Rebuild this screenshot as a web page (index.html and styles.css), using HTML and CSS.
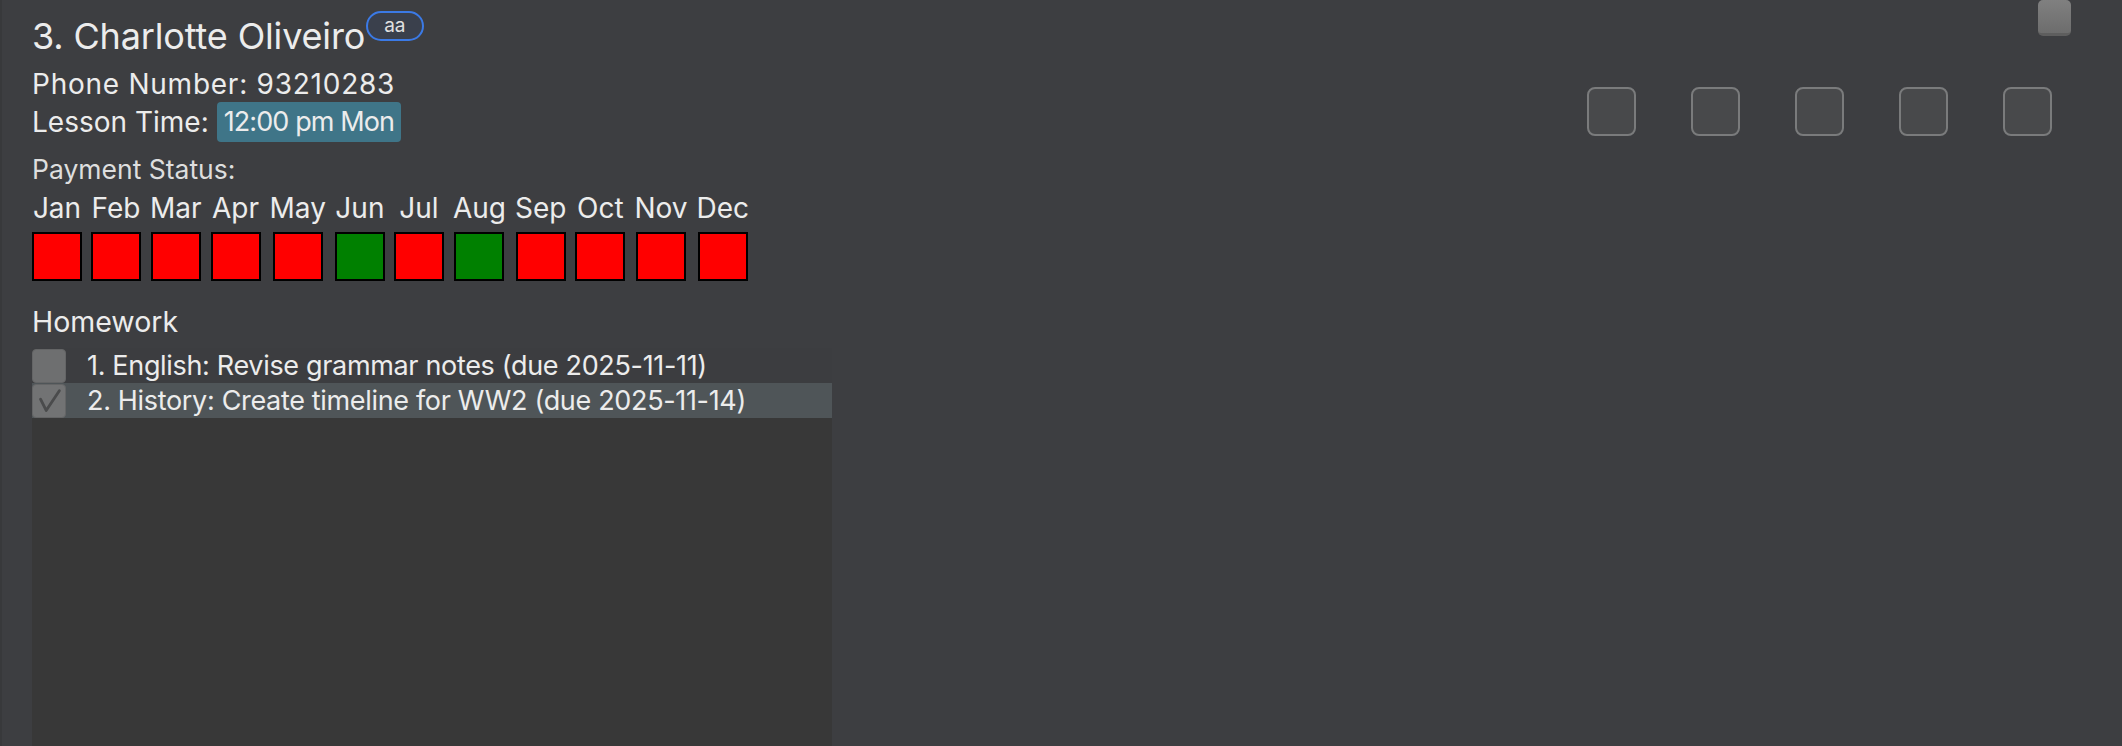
FILE: index.html
```html
<!DOCTYPE html>
<html>
<head>
<meta charset="utf-8">
<link rel="stylesheet" href="styles.css">
</head>
<body>
<div class="page">
  <div class="card">
    <div class="title-row">
      <span class="name">3. Charlotte Oliveiro</span>
      <span class="tag">aa</span>
    </div>
    <div class="phone">Phone Number: 93210283</div>
    <div class="lesson"><span class="lesson-label">Lesson Time:</span><span class="chip">12:00 pm Mon</span></div>
    <div class="pay-label">Payment Status:</div>
    <div class="months">
      <div class="month"><span class="mlabel">Jan</span><span class="mbox unpaid"></span></div>
      <div class="month"><span class="mlabel">Feb</span><span class="mbox unpaid"></span></div>
      <div class="month"><span class="mlabel">Mar</span><span class="mbox unpaid"></span></div>
      <div class="month"><span class="mlabel">Apr</span><span class="mbox unpaid"></span></div>
      <div class="month"><span class="mlabel">May</span><span class="mbox unpaid"></span></div>
      <div class="month"><span class="mlabel">Jun</span><span class="mbox paid"></span></div>
      <div class="month"><span class="mlabel">Jul</span><span class="mbox unpaid"></span></div>
      <div class="month"><span class="mlabel">Aug</span><span class="mbox paid"></span></div>
      <div class="month"><span class="mlabel">Sep</span><span class="mbox unpaid"></span></div>
      <div class="month"><span class="mlabel">Oct</span><span class="mbox unpaid"></span></div>
      <div class="month"><span class="mlabel">Nov</span><span class="mbox unpaid"></span></div>
      <div class="month"><span class="mlabel">Dec</span><span class="mbox unpaid"></span></div>
    </div>
    <div class="hw-label">Homework</div>
    <div class="hw-list">
      <div class="hw-item">
        <span class="cb"></span>
        <span class="hw-text">1. English: Revise grammar notes (due 2025-11-11)</span>
      </div>
      <div class="hw-item selected">
        <span class="cb checked"><svg width="34" height="34" viewBox="0 0 34 34"><polyline points="8,14 14,26 28,5" fill="none" stroke="#4a4b4c" stroke-width="3" stroke-linecap="round" stroke-linejoin="round"/></svg></span>
        <span class="hw-text">2. History: Create timeline for WW2 (due 2025-11-14)</span>
      </div>
    </div>
  </div>
  <div class="side">
    <span class="top-cb"></span>
    <div class="slots">
      <span class="slot"></span>
      <span class="slot"></span>
      <span class="slot"></span>
      <span class="slot"></span>
      <span class="slot"></span>
    </div>
  </div>
</div>
</body>
</html>
```
FILE: styles.css
```css
html, body {
  margin: 0;
  padding: 0;
  height: 100%;
}
body {
  background: #3d3e41;
  font-family: Inter, "Noto Sans", sans-serif;
  color: #ececec;
  overflow: hidden;
}
.page {
  display: flex;
  height: 746px;
  border-left: 2px solid #38393b;
  box-sizing: border-box;
}
.card {
  width: 800px;
  margin-left: 30px;
  display: flex;
  flex-direction: column;
}
.title-row {
  display: flex;
  align-items: flex-start;
  padding-top: 11px;
}
.name {
  font-size: 36px;
  line-height: 44px;
  margin-top: 3px;
  letter-spacing: -0.15px;
}
.tag {
  margin-left: 1px;
  height: 30px;
  box-sizing: border-box;
  border: 2px solid #3b7ae6;
  border-radius: 15px;
  background: #3a404c;
  font-size: 19px;
  line-height: 25px;
  padding: 0 16px;
  color: #e0e0e0;
}
.phone {
  font-size: 28px;
  line-height: 34px;
  margin-top: 9px;
  letter-spacing: 0.75px;
}
.lesson {
  display: flex;
  align-items: center;
  height: 40px;
  margin-top: 1px;
  font-size: 28px;
}
.chip {
  margin-left: 8px;
  background: #3f7588;
  border-radius: 4px;
  padding: 0 7px;
  height: 40px;
  line-height: 40px;
  font-size: 27px;
  letter-spacing: -0.9px;
}
.pay-label {
  font-size: 26.5px;
  line-height: 32px;
  margin-top: 11px;
  color: #dedede;
}
.months {
  display: flex;
  gap: 9px;
  margin-top: 6px;
}
.month {
  display: flex;
  flex-direction: column;
  align-items: center;
  min-width: 50px;
}
.mlabel {
  font-size: 28px;
  line-height: 34px;
}
.mbox {
  width: 50px;
  height: 49px;
  border: 2px solid #000;
  box-sizing: border-box;
  margin-top: 7px;
}
.unpaid { background: #ff0000; }
.paid { background: #008000; }
.hw-label {
  font-size: 28.5px;
  line-height: 34px;
  margin-top: 24px;
}
.hw-list {
  margin-top: 9px;
  flex: 1;
  background: #383838;
}
.hw-item {
  height: 35px;
  display: flex;
  align-items: center;
  background: #3c3d40;
}
.hw-item.selected {
  background: #4f5558;
}
.cb {
  width: 34px;
  height: 34px;
  box-sizing: border-box;
  border: 1px solid #646566;
  border-radius: 4px;
  background: #6e6f70;
  margin-right: 21px;
  display: flex;
}
.cb.checked {
  background: #727374;
}
.hw-text {
  font-size: 27px;
  line-height: 35px;
  letter-spacing: -0.33px;
}
.side {
  flex: 1;
  display: flex;
  flex-direction: column;
  align-items: flex-end;
  padding-right: 51px;
}
.top-cb {
  width: 33px;
  height: 36px;
  box-sizing: border-box;
  border-radius: 5px;
  background: linear-gradient(#808080, #6d6d6d);
  border-bottom: 3px solid #5e5e5e;
}
.slots {
  display: flex;
  gap: 55px;
  margin-top: 51px;
  margin-right: 19px;
}
.slot {
  width: 49px;
  height: 49px;
  box-sizing: border-box;
  border: 2px solid #7a7b7c;
  border-radius: 8px;
  background: #48494b;
}
```
